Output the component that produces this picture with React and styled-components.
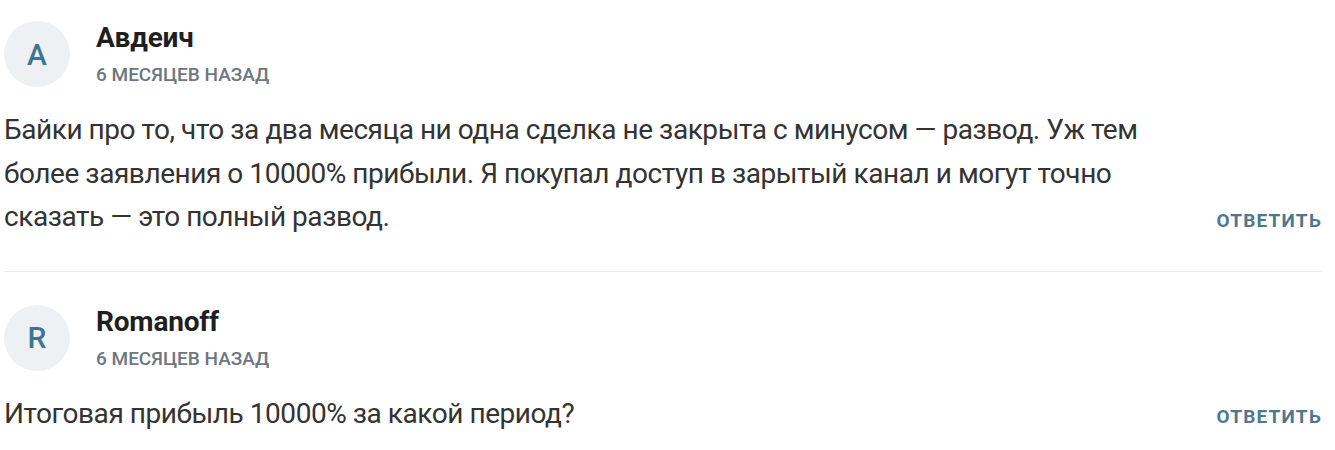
import React from 'react'
import styled, { createGlobalStyle } from 'styled-components'

const GlobalStyle = createGlobalStyle`
    body {
        margin: 0;
        background: #ffffff;
        font-family: Roboto, "Noto Sans", sans-serif;
    }
`

const comments = [
    {
        id: 1,
        author: 'Авдеич',
        date: '6 месяцев назад',
        text: 'Байки про то, что за два месяца ни одна сделка не закрыта с минусом — развод. Уж тем более заявления о 10000% прибыли. Я покупал доступ в зарытый канал и могут точно сказать — это полный развод.',
    },
    {
        id: 2,
        author: 'Romanoff',
        date: '6 месяцев назад',
        text: 'Итоговая прибыль 10000% за какой период?',
    },
]

export default function App() {
    return (
        <>
            <GlobalStyle />
            <List>
                {comments.map((c, i) => (
                    <Comment key={c.id} $last={i === comments.length - 1}>
                        <Header>
                            <Avatar>{c.author[0]}</Avatar>
                            <Meta>
                                <Author>{c.author}</Author>
                                <Date>{c.date}</Date>
                            </Meta>
                        </Header>
                        <Body>
                            <Text>{c.text}</Text>
                            <Reply>Ответить</Reply>
                        </Body>
                    </Comment>
                ))}
            </List>
        </>
    )
}

const List = styled.div`
    display: flex;
    flex-direction: column;
    width: 1318px;
    padding: 0 0 0 4px;
`

const Comment = styled.div`
    display: flex;
    flex-direction: column;
    gap: 21px;
    padding: 21px 0 ${p => (p.$last ? '0' : '32px')};
    border-bottom: ${p => (p.$last ? 'none' : '1px solid #e9ecee')};
    & + & {
        padding-top: 33px;
    }
`

const Header = styled.div`
    display: flex;
    align-items: center;
    gap: 26px;
`

const Avatar = styled.div`
    width: 66px;
    height: 66px;
    border-radius: 50%;
    background: #eef1f4;
    color: #41758f;
    font-size: 30px;
    font-weight: 500;
    display: flex;
    align-items: center;
    justify-content: center;
    flex-shrink: 0;
`

const Meta = styled.div`
    display: flex;
    flex-direction: column;
    gap: 10px;
`

const Author = styled.span`
    font-size: 28px;
    line-height: 32px;
    font-weight: 700;
    letter-spacing: -0.2px;
    color: #1f1f1f;
`

const Date = styled.span`
    font-size: 19px;
    line-height: 22px;
    font-weight: 500;
    text-transform: uppercase;
    color: #6d7780;
`

const Body = styled.div`
    display: flex;
    align-items: flex-end;
    justify-content: space-between;
    gap: 20px;
`

const Text = styled.p`
    margin: 0;
    max-width: 1170px;
    font-size: 28px;
    line-height: 43.5px;
    letter-spacing: -0.45px;
    color: #333333;
`

const Reply = styled.button`
    border: none;
    background: none;
    padding: 0 0 7px;
    font-family: inherit;
    font-size: 19px;
    line-height: 22px;
    font-weight: 700;
    letter-spacing: 1.2px;
    text-transform: uppercase;
    color: #4f7890;
    cursor: pointer;
    white-space: nowrap;
`
